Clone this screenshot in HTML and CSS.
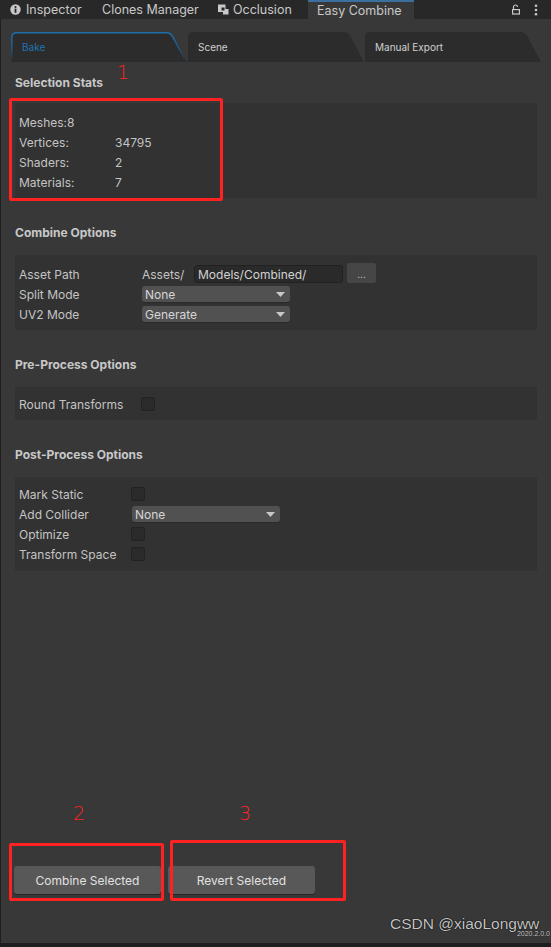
FILE: index.html
```html
<!DOCTYPE html>
<html>
<head>
<meta charset="utf-8">
<link rel="stylesheet" href="styles.css">
</head>
<body>
<div class="window">
  <div class="topbar">
    <div class="wtab t1">
      <svg class="ico" width="11" height="11" viewBox="0 0 11 11"><circle cx="5.5" cy="5.5" r="5.2" fill="#c8c8c8"/><circle cx="5.5" cy="3" r="1.1" fill="#282828"/><rect x="4.6" y="4.6" width="1.8" height="4.2" fill="#282828"/></svg>
      <span>Inspector</span>
    </div>
    <div class="wtab t2"><span>Clones Manager</span></div>
    <div class="wtab t3">
      <svg class="ico" width="11" height="11" viewBox="0 0 11 11"><rect x="0" y="0.5" width="7.5" height="7.5" fill="#c8c8c8"/><rect x="3.5" y="3.5" width="3" height="3" fill="#282828"/><rect x="5" y="5" width="5.5" height="5.5" fill="#c8c8c8"/><rect x="5" y="5" width="1.5" height="1.5" fill="#282828"/></svg>
      <span>Occlusion</span>
    </div>
    <div class="wtab t4 active"><span>Easy Combine</span></div>
    <div class="topfill"></div>
    <svg class="lock" width="8" height="11" viewBox="0 0 8 11"><path d="M1.5 5V3A2 2 0 0 1 5.5 3" fill="none" stroke="#c8c8c8" stroke-width="1.2"/><rect x="0.6" y="5.6" width="6.8" height="4.4" fill="none" stroke="#c8c8c8" stroke-width="1.2"/></svg>
    <svg class="dots" width="4" height="12" viewBox="0 0 4 12"><circle cx="2" cy="1.8" r="1.3" fill="#c8c8c8"/><circle cx="2" cy="6" r="1.3" fill="#c8c8c8"/><circle cx="2" cy="10.2" r="1.3" fill="#c8c8c8"/></svg>
  </div>

  <div class="main">
    <div class="subtabs">
      <div class="stab sel">Bake</div>
      <div class="stab">Scene</div>
      <div class="stab">Manual Export</div>
    </div>

    <div class="content">
      <div class="section s-stats">
        <h2 class="head">Selection Stats</h2>
        <div class="box stats">
          <div class="row"><span>Meshes:</span><span>8</span></div>
          <div class="row"><span class="slbl">Vertices:</span><span>34795</span></div>
          <div class="row"><span class="slbl">Shaders:</span><span>2</span></div>
          <div class="row"><span class="slbl">Materials:</span><span>7</span></div>
        </div>
      </div>

      <div class="section s-combine">
        <h2 class="head">Combine Options</h2>
        <div class="box combine">
          <div class="row">
            <span class="lbl w123">Asset Path</span>
            <span class="prefix">Assets/</span>
            <span class="textfield">Models/Combined/</span>
            <span class="smallbtn">...</span>
          </div>
          <div class="row">
            <span class="lbl w123">Split Mode</span>
            <span class="dropdown w148"><span>None</span><svg width="9" height="5" viewBox="0 0 9 5"><path d="M0 0H9L4.5 5Z" fill="#c8c8c8"/></svg></span>
          </div>
          <div class="row">
            <span class="lbl w123">UV2 Mode</span>
            <span class="dropdown w148"><span>Generate</span><svg width="9" height="5" viewBox="0 0 9 5"><path d="M0 0H9L4.5 5Z" fill="#c8c8c8"/></svg></span>
          </div>
        </div>
      </div>

      <div class="section s-pre">
        <h2 class="head">Pre-Process Options</h2>
        <div class="box pre">
          <div class="row"><span class="lbl w122">Round Transforms</span><span class="check"></span></div>
        </div>
      </div>

      <div class="section s-post">
        <h2 class="head">Post-Process Options</h2>
        <div class="box post">
          <div class="row"><span class="lbl w112">Mark Static</span><span class="check"></span></div>
          <div class="row"><span class="lbl w112">Add Collider</span><span class="dropdown w148 ml1"><span>None</span><svg width="9" height="5" viewBox="0 0 9 5"><path d="M0 0H9L4.5 5Z" fill="#c8c8c8"/></svg></span></div>
          <div class="row"><span class="lbl w112">Optimize</span><span class="check"></span></div>
          <div class="row"><span class="lbl w112">Transform Space</span><span class="check"></span></div>
        </div>
      </div>
    </div>

    <div class="actions">
      <div class="btn">Combine Selected</div>
      <div class="btn">Revert Selected</div>
    </div>
    <div class="footer"></div>
  </div>
  <div class="bottomline"></div>

  <div class="mark box1"></div>
  <div class="num n1">1</div>
  <div class="mark box2"></div>
  <div class="num n2">2</div>
  <div class="mark box3"></div>
  <div class="num n3">3</div>
  <div class="watermark">CSDN @xiaoLongww</div>
  <div class="version">2020.2.0.0</div>
</div>
</body>
</html>
```

FILE: styles.css
```css
* { box-sizing: border-box; }
html, body { margin: 0; padding: 0; height: 947px; overflow: hidden; }
body {
  background: #383838;
  font-family: Inter, "Noto Sans", "DejaVu Sans", sans-serif;
  font-size: 12px;
  color: #c4c4c4;
}
.window {
  position: relative;
  height: 947px;
  display: flex;
  flex-direction: column;
}

/* window tab bar */
.topbar {
  flex: none;
  height: 19px;
  background: #282828;
  display: flex;
  align-items: stretch;
}
.wtab {
  display: flex;
  align-items: center;
  gap: 5px;
  font-size: 12.5px;
  color: #c8c8c8;
  white-space: nowrap;
}
.wtab.t1 { width: 90px; padding-left: 10px; }
.wtab.t2 { width: 116px; padding-left: 12px; }
.wtab.t3 { width: 102px; padding-left: 12px; gap: 4px; }
.wtab.t4 { width: 106px; padding-left: 9px; }
.wtab.active {
  background: #383838;
  border-top: 2px solid #3b6f9f;
  padding-bottom: 1px;
}
.ico { flex: none; }
.topfill { flex: 1; }
.lock { align-self: center; margin-right: 14px; }
.dots { align-self: center; margin-right: 13px; }

/* main area */
.main {
  flex: 1;
  display: flex;
  flex-direction: column;
  box-shadow: inset 1px 0 #1f1f1f;
}
.subtabs {
  margin-top: 13px;
  height: 30px;
  padding-left: 11px;
  display: flex;
  gap: 1px;
}
.stab {
  width: 176px;
  height: 30px;
  padding-left: 10px;
  display: flex;
  align-items: center;
  font-size: 10px;
  color: #d0d0d0;
  background: url("data:image/svg+xml,%3Csvg xmlns='http://www.w3.org/2000/svg' width='176' height='30'%3E%3Cpath d='M0 30V5Q0 0 5 0H156Q160 0 162.5 4.5L176 30Z' fill='%232c2c2c'/%3E%3C/svg%3E") no-repeat;
}
.stab.sel {
  padding-left: 11px;
  color: #1f73b0;
  background: url("data:image/svg+xml,%3Csvg xmlns='http://www.w3.org/2000/svg' width='176' height='30'%3E%3Cdefs%3E%3ClinearGradient id='g' x1='0' y1='0' x2='0' y2='1'%3E%3Cstop offset='0' stop-color='%231e6ea8'/%3E%3Cstop offset='0.55' stop-color='%231e6ea8' stop-opacity='0.6'/%3E%3Cstop offset='1' stop-color='%231e6ea8' stop-opacity='0'/%3E%3C/linearGradient%3E%3C/defs%3E%3Cpath d='M0 30V5Q0 0 5 0H156Q160 0 162.5 4.5L176 30Z' fill='%232c2c2c'/%3E%3Cpath d='M0.8 30V5.5Q0.8 0.8 5.5 0.8H156Q159.5 0.8 161.8 4.8L175.2 30' fill='none' stroke='url(%23g)' stroke-width='1.6'/%3E%3C/svg%3E") no-repeat;
}

.content {
  padding: 0 14px 0 15px;
}
.head {
  margin: 0;
  height: 20px;
  line-height: 20px;
  font-size: 12px;
  font-weight: 700;
  color: #c8c8c8;
}
.box {
  background: #323232;
  padding: 0 4px;
}
.row {
  height: 20px;
  display: flex;
  align-items: center;
  white-space: nowrap;
}
.s-stats .head { margin-top: 11px; }
.stats { margin-top: 10px; padding-top: 9px; padding-bottom: 6px; }
.slbl { width: 96px; }

.s-combine .head { margin-top: 25px; }
.combine { margin-top: 12px; padding-top: 9px; padding-bottom: 6px; }
.s-pre .head { margin-top: 25px; }
.pre { margin-top: 12px; padding-top: 7px; padding-bottom: 6px; }
.s-post .head { margin-top: 25px; }
.post { margin-top: 12px; padding-top: 7px; padding-bottom: 7px; }

.lbl { flex: none; }
.w123 { width: 123px; }
.w122 { width: 122px; }
.w112 { width: 112px; }

.prefix { width: 52px; }
.textfield {
  width: 149px;
  height: 18px;
  background: #2a2a2a;
  border: 1px solid #212121;
  border-radius: 3px;
  padding-left: 3px;
  display: flex;
  align-items: center;
  color: #d2d2d2;
}
.smallbtn {
  width: 29px;
  height: 20px;
  margin-left: 4px;
  margin-top: -3px;
  background: #464646;
  border-radius: 2px;
  display: flex;
  align-items: center;
  justify-content: center;
  font-size: 10px;
  color: #c8c8c8;
  padding-top: 3px;
}
.dropdown {
  height: 16px;
  background: #515151;
  border-radius: 3px;
  padding: 0 5px 0 3px;
  display: flex;
  align-items: center;
  justify-content: space-between;
  color: #d6d6d6;
  box-shadow: 0 1px #2a2a2a;
}
.w148 { width: 148px; }
.ml1 { margin-left: 1px; }
.check {
  width: 14px;
  height: 14px;
  background: #2b2b2b;
  border: 1px solid #222;
  border-radius: 2px;
}

.actions {
  margin-top: auto;
  padding-left: 14px;
  display: flex;
  gap: 7px;
}
.btn {
  width: 147px;
  height: 28px;
  background: #585858;
  border-radius: 3px;
  box-shadow: 0 1px #262626;
  display: flex;
  align-items: center;
  justify-content: center;
  color: #e2e2e2;
  font-size: 12px;
}
.footer { height: 49px; }
.bottomline { flex: none; height: 4px; background: #1e1e1e; }

/* annotations */
.mark {
  position: absolute;
  border: 3px solid #ff2222;
  border-radius: 2px;
}
.box1 { left: 9px; top: 98px; width: 214px; height: 103px; }
.box2 { left: 9px; top: 843px; width: 155px; height: 58px; }
.box3 { left: 170px; top: 840px; width: 176px; height: 61px; }
.num {
  position: absolute;
  color: #ff2222;
  font-family: "DejaVu Sans", sans-serif;
  font-weight: 300;
  font-size: 19px;
  line-height: 20px;
}
.n1 { left: 117px; top: 62px; }
.n2 { left: 73px; top: 803px; }
.n3 { left: 239px; top: 803px; }
.watermark {
  position: absolute;
  left: 390px;
  top: 915px;
  font-family: "Liberation Sans", Arial, sans-serif;
  font-size: 15.5px;
  color: #c4c4c4;
  text-shadow: 0 0 1px #000, 0 0 1px #000;
  white-space: nowrap;
}
.version {
  position: absolute;
  right: 1px;
  top: 930px;
  font-family: "Liberation Sans", Arial, sans-serif;
  font-size: 7px;
  color: #cfcfcf;
  text-shadow: 0 0 1px #000;
  white-space: nowrap;
}
```
